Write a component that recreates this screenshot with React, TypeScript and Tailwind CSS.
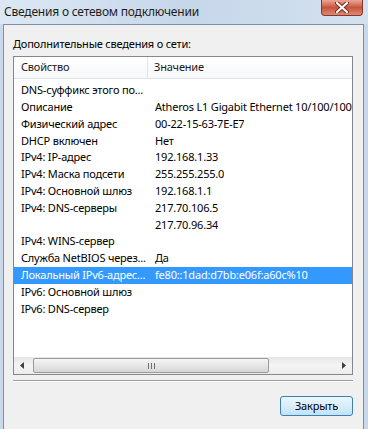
const rows: { name: string; value: string; selected?: boolean }[] = [
  { name: 'DNS-суффикс этого по...', value: '' },
  { name: 'Описание', value: 'Atheros L1 Gigabit Ethernet 10/100/1000' },
  { name: 'Физический адрес', value: '00-22-15-63-7E-E7' },
  { name: 'DHCP включен', value: 'Нет' },
  { name: 'IPv4: IP-адрес', value: '192.168.1.33' },
  { name: 'IPv4: Маска подсети', value: '255.255.255.0' },
  { name: 'IPv4: Основной шлюз', value: '192.168.1.1' },
  { name: 'IPv4: DNS-серверы', value: '217.70.106.5' },
  { name: '', value: '217.70.96.34' },
  { name: 'IPv4: WINS-сервер', value: '' },
  { name: 'Служба NetBIOS через...', value: 'Да' },
  { name: 'Локальный IPv6-адрес...', value: 'fe80::1dad:d7bb:e06f:a60c%10', selected: true },
  { name: 'IPv6: Основной шлюз', value: '' },
  { name: 'IPv6: DNS-сервер', value: '' },
];

const CloseGlyph = () => (
  <svg width="14" height="11" viewBox="0 0 14 11">
    <path d="M2 1 L12 10 M12 1 L2 10" stroke="#6e2a1e" strokeWidth="4" strokeLinecap="round" />
    <path d="M2 1 L12 10 M12 1 L2 10" stroke="#ffffff" strokeWidth="2.2" strokeLinecap="round" />
  </svg>
);

const Arrow = ({ dir }: { dir: 'left' | 'right' }) => (
  <svg width="5" height="7" viewBox="0 0 5 7">
    <path d={dir === 'left' ? 'M4 0 L0 3.5 L4 7 Z' : 'M1 0 L5 3.5 L1 7 Z'} fill="#404040" />
  </svg>
);

const App = () => {
  return (
    <div className="relative flex h-[429px] w-[368px] flex-col overflow-hidden bg-[#c9d9eb] font-['Segoe_UI','Noto_Sans',sans-serif] text-[11px] tracking-[-0.2px] text-black">
      {/* title bar */}
      <div className="flex h-[24px] items-center bg-linear-to-r from-[#dde8f4] via-[#c6d7ea] to-[#d4e1ef] pl-[4px]">
        <span className="text-[12px] text-[#1e1e1e]">Сведения о сетевом подключении</span>
      </div>
      <div className="absolute right-[5px] top-0 flex h-[16px] w-[42px] items-center justify-center rounded-b-[4px] border border-t-0 border-[#86372a] bg-linear-to-b from-[#e8a797] via-[#c9533d] to-[#d98a72]">
        <CloseGlyph />
      </div>

      {/* client area */}
      <div className="ml-[3px] mr-[4px] flex flex-1 flex-col border border-b-0 border-[#7d8fa5] bg-[#f0f0f0] pl-[9px] pr-[10px] pt-[11px]">
        <div className="h-[16px] leading-[16px]">Дополнительные сведения о сети:</div>

        <div className="mt-[4px] flex h-[319px] flex-col overflow-hidden border border-[#828790] bg-white">
          {/* header */}
          <div className="flex h-[22px] shrink-0 border-b border-[#e2e2e2] bg-linear-to-b from-white to-[#f7f8fa] text-[#1a1a1a]">
            <div className="flex w-[134px] items-center border-r border-[#e3e3e3] pl-[7px]">Свойство</div>
            <div className="flex flex-1 items-center pl-[6px]">Значение</div>
          </div>

          {/* rows */}
          <div className="flex-1 overflow-hidden pt-[3px]">
            {rows.map((r, i) => (
              <div
                key={i}
                className={
                  r.selected
                    ? 'flex h-[16.8px] items-center whitespace-nowrap bg-[#3399ff] text-white'
                    : 'flex h-[16.8px] items-center whitespace-nowrap'
                }
              >
                <div className="w-[134px] shrink-0 overflow-hidden pl-[7px]">{r.name}</div>
                <div className="overflow-hidden pl-[7px]">{r.value}</div>
              </div>
            ))}
          </div>

          {/* horizontal scrollbar */}
          <div className="flex h-[17px] shrink-0 items-center bg-linear-to-b from-[#e6e6e6] via-[#f4f4f4] to-[#ececec]">
            <div className="flex w-[17px] items-center justify-center">
              <Arrow dir="left" />
            </div>
            <div className="ml-[2px] flex h-[15px] w-[236px] items-center justify-center rounded-[2px] border border-[#9b9b9b] bg-linear-to-b from-[#f5f5f5] via-[#e6e6e6] to-[#d6d6d6]">
              <div className="flex gap-[2px]">
                <div className="h-[6px] w-[1px] bg-[#707070]" />
                <div className="h-[6px] w-[1px] bg-[#707070]" />
                <div className="h-[6px] w-[1px] bg-[#707070]" />
              </div>
            </div>
            <div className="flex-1" />
            <div className="flex w-[17px] items-center justify-center">
              <Arrow dir="right" />
            </div>
          </div>
        </div>

        {/* separator */}
        <div className="mt-[5px] h-[2px] border-t border-b border-t-[#a0a0a0] border-b-white" />

        {/* footer */}
        <div className="mt-[14px] flex justify-end">
          <button className="flex h-[20px] w-[73px] items-center justify-center rounded-[3px] border border-[#3c7fb1] bg-linear-to-b from-[#ecf6fc] via-[#d8eefa] to-[#bfe3f6] text-[11px] text-black">
            Закрыть
          </button>
        </div>
      </div>
    </div>
  );
};

export default App;
